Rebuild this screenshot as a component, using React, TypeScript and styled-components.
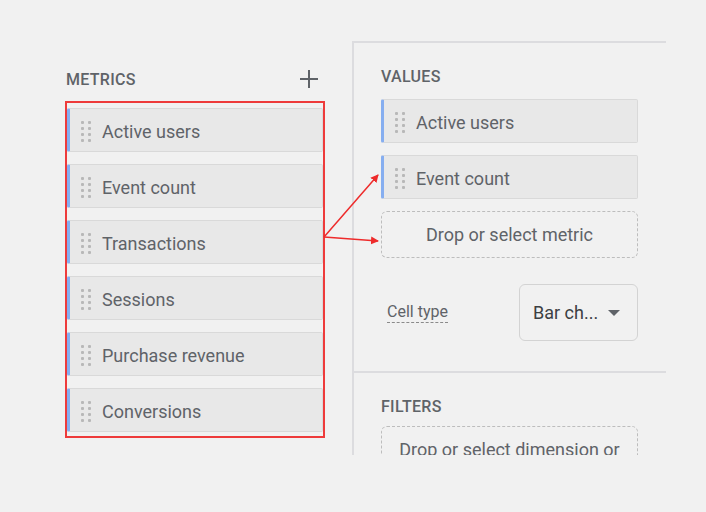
import styled, { createGlobalStyle } from 'styled-components';

const GlobalStyle = createGlobalStyle`
  html, body {
    margin: 0;
    padding: 0;
    background: #f1f1f1;
    font-family: Roboto, 'Liberation Sans', Arial, sans-serif;
  }
`;

const metrics = [
  'Active users',
  'Event count',
  'Transactions',
  'Sessions',
  'Purchase revenue',
  'Conversions',
];

const values = ['Active users', 'Event count'];

const DragHandle = (): JSX.Element => (
  <Handle>
    {Array.from({ length: 8 }).map((_, i) => (
      <span key={i} />
    ))}
  </Handle>
);

const App = (): JSX.Element => {
  return (
    <Page>
      <GlobalStyle />
      <LeftColumn>
        <SectionHeader>
          <span>METRICS</span>
          <PlusIcon viewBox="0 0 20 20">
            <path d="M10 1v18M1 10h18" stroke="#5f6368" strokeWidth="2" />
          </PlusIcon>
        </SectionHeader>
        <Highlight>
          {metrics.map((m) => (
            <Chip key={m}>
              <DragHandle />
              <span>{m}</span>
            </Chip>
          ))}
        </Highlight>
      </LeftColumn>

      <Panel>
        <Section bottom_border>
          <Title spacing={12}>VALUES</Title>
          <ChipList>
            {values.map((v) => (
              <Chip key={v}>
                <DragHandle />
                <span>{v}</span>
              </Chip>
            ))}
            <DropZone>Drop or select metric</DropZone>
          </ChipList>
          <CellRow>
            <CellLabel>Cell type</CellLabel>
            <Select>
              <span>Bar ch...</span>
              <Caret />
            </Select>
          </CellRow>
        </Section>
        <Section>
          <Title spacing={9}>FILTERS</Title>
          <ChipList>
            <DropZone>Drop or select dimension or</DropZone>
          </ChipList>
        </Section>
      </Panel>

      <Annotation viewBox="0 0 706 512">
        <defs>
          <marker
            id="head"
            markerWidth="8"
            markerHeight="8"
            refX="7"
            refY="4"
            orient="auto"
            markerUnits="userSpaceOnUse"
          >
            <path d="M0 0L8 4L0 8z" fill="#ee2b2b" />
          </marker>
        </defs>
        <line
          x1="324"
          y1="237"
          x2="378"
          y2="175"
          stroke="#ee2b2b"
          strokeWidth="1.5"
          markerEnd="url(#head)"
        />
        <line
          x1="324"
          y1="237"
          x2="378"
          y2="241"
          stroke="#ee2b2b"
          strokeWidth="1.5"
          markerEnd="url(#head)"
        />
      </Annotation>
    </Page>
  );
};

const Page = styled.div`
  position: relative;
  width: 706px;
  height: 512px;
  box-sizing: border-box;
  padding: 41px 0 0 65px;
  display: flex;
  flex-direction: row;
  align-items: flex-start;
  overflow: hidden;
`;

const LeftColumn = styled.div`
  width: 260px;
  padding-top: 25px;
  display: flex;
  flex-direction: column;
`;

const SectionHeader = styled.div`
  height: 26px;
  display: flex;
  flex-direction: row;
  justify-content: space-between;
  align-items: center;
  padding: 0 6px 0 1px;
  margin-bottom: 9px;
  span {
    font-size: 16px;
    font-weight: 500;
    letter-spacing: 0.3px;
    color: #5f6368;
  }
`;

const PlusIcon = styled.svg`
  width: 20px;
  height: 20px;
`;

const Highlight = styled.div`
  border: 2px solid #ee3b3b;
  padding: 5px 0 4px 0;
  display: flex;
  flex-direction: column;
  gap: 12px;
`;

const Chip = styled.div`
  height: 44px;
  box-sizing: border-box;
  display: flex;
  flex-direction: row;
  align-items: center;
  gap: 11px;
  padding: 2px 0 0 11px;
  background: #e8e8e8;
  border: 1px solid #d9d9d9;
  border-left: 3px solid #86aef0;
  border-radius: 2px;
  span {
    font-size: 18px;
    color: #5f6368;
  }
`;

const Handle = styled.div`
  display: grid;
  grid-template-columns: 3px 3px;
  grid-template-rows: repeat(4, 3px);
  column-gap: 4px;
  row-gap: 3px;
  span {
    background: #b8b8b8;
    border-radius: 1px;
  }
`;

const Panel = styled.div`
  margin-left: 27px;
  width: 314px;
  height: 414px;
  box-sizing: border-box;
  border-top: 2px solid #dcdcdf;
  border-left: 2px solid #dcdcdf;
  overflow: hidden;
  display: flex;
  flex-direction: column;
`;

const Section = styled.div<{ bottom_border?: boolean }>`
  padding: 24px 28px 30px 27px;
  border-bottom: ${(p) => (p.bottom_border ? '2px solid #dcdcdf' : 'none')};
  display: flex;
  flex-direction: column;
`;

const Title = styled.div<{ spacing: number }>`
  height: 20px;
  line-height: 20px;
  font-size: 16px;
  font-weight: 500;
  letter-spacing: 0.3px;
  color: #5f6368;
  margin-bottom: ${(p) => p.spacing}px;
`;

const ChipList = styled.div`
  display: flex;
  flex-direction: column;
  gap: 12px;
`;

const DropZone = styled.div`
  height: 47px;
  box-sizing: border-box;
  border: 1.5px dashed #bdbdbd;
  border-radius: 6px;
  display: flex;
  justify-content: center;
  align-items: center;
  font-size: 18px;
  color: #5f6368;
`;

const CellRow = styled.div`
  margin-top: 26px;
  display: flex;
  flex-direction: row;
  justify-content: space-between;
  align-items: center;
`;

const CellLabel = styled.span`
  margin-left: 6px;
  font-size: 16px;
  color: #5f6368;
  padding-bottom: 1px;
  border-bottom: 1.5px dashed #8a8a8a;
`;

const Select = styled.div`
  width: 119px;
  height: 57px;
  box-sizing: border-box;
  border: 1px solid #d3d3d3;
  border-radius: 6px;
  display: flex;
  flex-direction: row;
  align-items: center;
  justify-content: space-between;
  padding: 0 17px 0 13px;
  span {
    font-size: 18px;
    color: #3c4043;
  }
`;

const Caret = styled.div`
  width: 0;
  height: 0;
  border-left: 6px solid transparent;
  border-right: 6px solid transparent;
  border-top: 6px solid #5f6368;
`;

const Annotation = styled.svg`
  position: absolute;
  left: 0;
  top: 0;
  width: 706px;
  height: 512px;
  pointer-events: none;
`;

export default App;
